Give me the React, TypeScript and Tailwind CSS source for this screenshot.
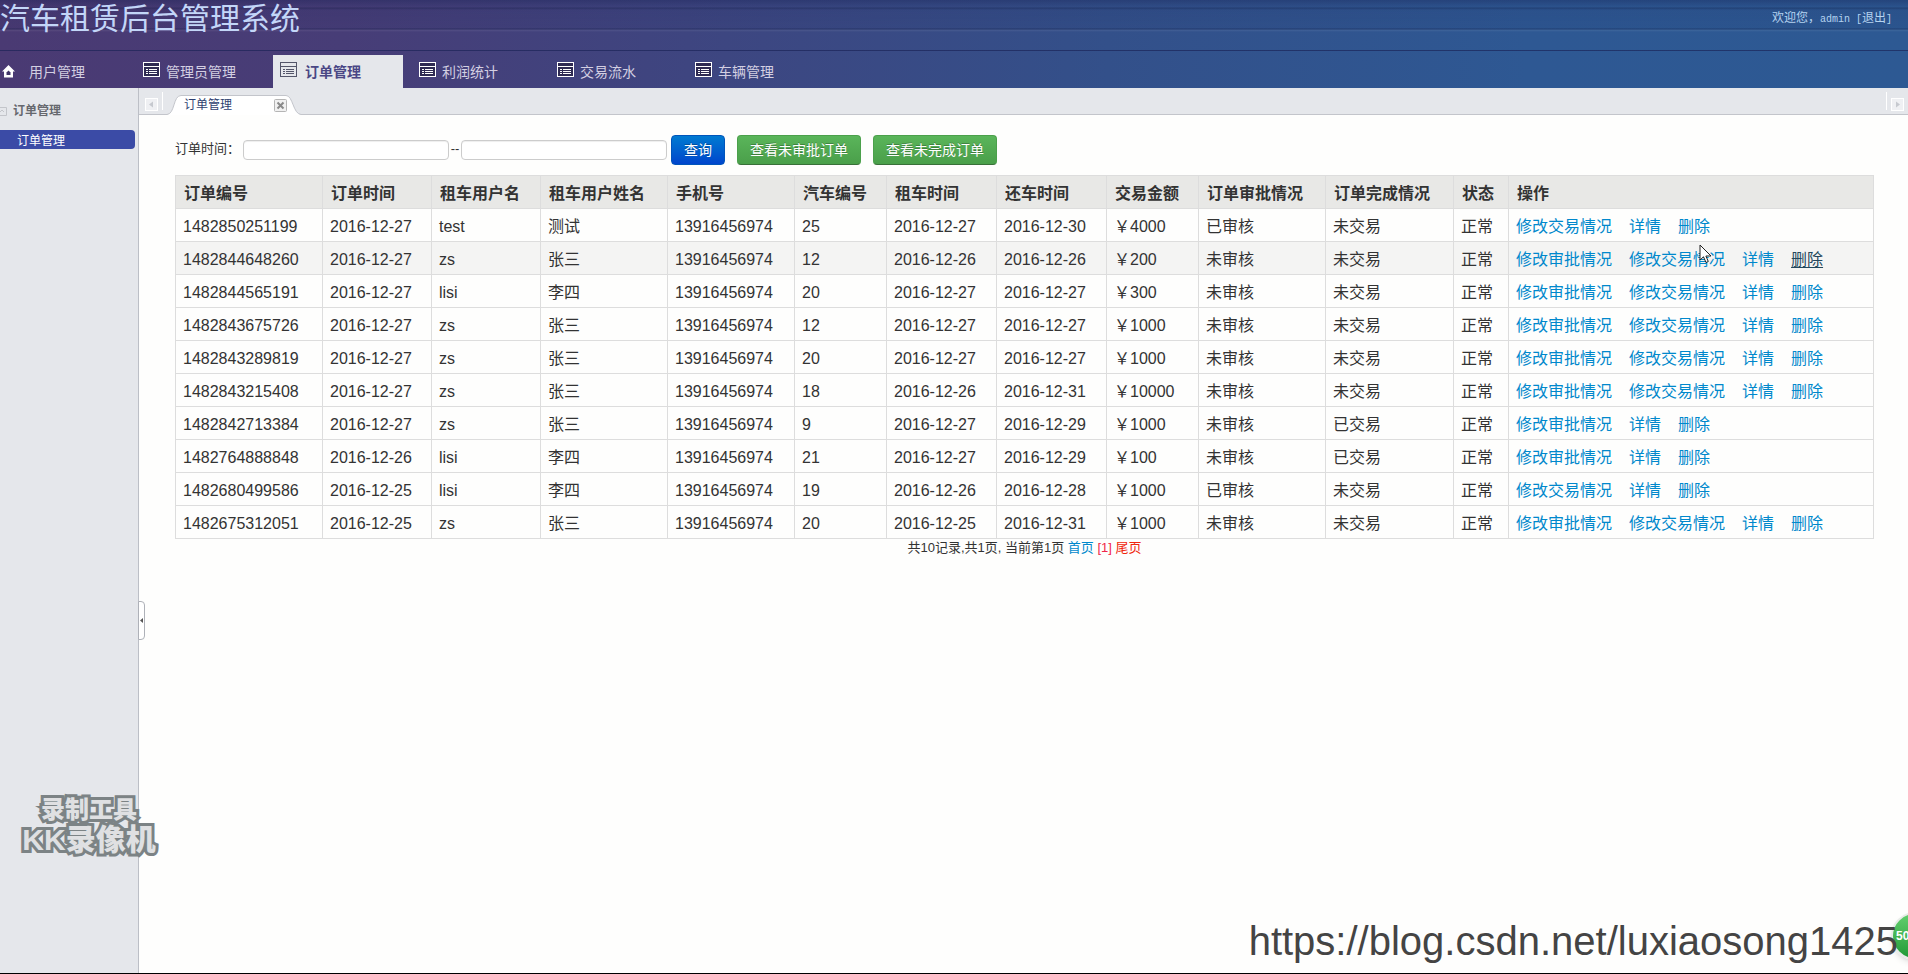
import type { ReactNode } from 'react';

interface Order {
  id: string;
  date: string;
  user: string;
  name: string;
  car: string;
  start: string;
  end: string;
  amount: string;
  approved: boolean;
  traded: boolean;
}

const orders: Order[] = [
  { id: '1482850251199', date: '2016-12-27', user: 'test', name: '测试', car: '25', start: '2016-12-27', end: '2016-12-30', amount: '4000', approved: true, traded: false },
  { id: '1482844648260', date: '2016-12-27', user: 'zs', name: '张三', car: '12', start: '2016-12-26', end: '2016-12-26', amount: '200', approved: false, traded: false },
  { id: '1482844565191', date: '2016-12-27', user: 'lisi', name: '李四', car: '20', start: '2016-12-27', end: '2016-12-27', amount: '300', approved: false, traded: false },
  { id: '1482843675726', date: '2016-12-27', user: 'zs', name: '张三', car: '12', start: '2016-12-27', end: '2016-12-27', amount: '1000', approved: false, traded: false },
  { id: '1482843289819', date: '2016-12-27', user: 'zs', name: '张三', car: '20', start: '2016-12-27', end: '2016-12-27', amount: '1000', approved: false, traded: false },
  { id: '1482843215408', date: '2016-12-27', user: 'zs', name: '张三', car: '18', start: '2016-12-26', end: '2016-12-31', amount: '10000', approved: false, traded: false },
  { id: '1482842713384', date: '2016-12-27', user: 'zs', name: '张三', car: '9', start: '2016-12-27', end: '2016-12-29', amount: '1000', approved: false, traded: true },
  { id: '1482764888848', date: '2016-12-26', user: 'lisi', name: '李四', car: '21', start: '2016-12-27', end: '2016-12-29', amount: '100', approved: false, traded: true },
  { id: '1482680499586', date: '2016-12-25', user: 'lisi', name: '李四', car: '19', start: '2016-12-26', end: '2016-12-28', amount: '1000', approved: true, traded: false },
  { id: '1482675312051', date: '2016-12-25', user: 'zs', name: '张三', car: '20', start: '2016-12-25', end: '2016-12-31', amount: '1000', approved: false, traded: false },
];

const columns = [
  { title: '订单编号', width: 'w-[147px]' },
  { title: '订单时间', width: 'w-[109px]' },
  { title: '租车用户名', width: 'w-[109px]' },
  { title: '租车用户姓名', width: 'w-[127px]' },
  { title: '手机号', width: 'w-[127px]' },
  { title: '汽车编号', width: 'w-[92px]' },
  { title: '租车时间', width: 'w-[110px]' },
  { title: '还车时间', width: 'w-[110px]' },
  { title: '交易金额', width: 'w-[92px]' },
  { title: '订单审批情况', width: 'w-[127px]' },
  { title: '订单完成情况', width: 'w-[128px]' },
  { title: '状态', width: 'w-[55px]' },
  { title: '操作', width: '' },
];

const navItems = ['用户管理', '管理员管理', '订单管理', '利润统计', '交易流水', '车辆管理'];
const ACTIVE_NAV = '订单管理';

function HomeIcon() {
  return (
    <svg width="13" height="13" viewBox="0 0 13 13" aria-hidden="true">
      <path d="M6.5 0 L13 6.5 H11 V12.5 H2 V6.5 H0 Z" fill="#fff" />
      <path d="M6.5 5.5 L8.5 7.5 V10 H4.5 V7.5 Z" fill="#3f3467" />
    </svg>
  );
}

function ListIcon({ dark }: { dark?: boolean }) {
  const c = dark ? '#54566a' : '#fff';
  return (
    <svg width="17" height="16" viewBox="0 0 17 16" shapeRendering="crispEdges" aria-hidden="true">
      <rect x="0.5" y="0.5" width="16" height="14" fill={dark ? 'none' : '#2e2a52'} stroke={c} />
      <path d="M1 4.5H16" stroke={c} />
      <path d="M3 7.5H5M6 7.5H14M3 9.5H5M6 9.5H14M3 11.5H5M6 11.5H14" stroke={c} />
    </svg>
  );
}

function Arrow({ right }: { right?: boolean }) {
  return (
    <svg width="13" height="13" viewBox="0 0 13 13" aria-hidden="true">
      <rect x="0.5" y="0.5" width="12" height="12" fill="#eff0f3" stroke="#fff" />
      <path d={right ? 'M5 3.5L9 6.5L5 9.5Z' : 'M8 3.5L4 6.5L8 9.5Z'} fill="#c6c9cf" />
    </svg>
  );
}

function ActionLink({ children, hovered }: { children: ReactNode; hovered?: boolean }) {
  return (
    <a href="#" className={hovered ? 'text-[#23475c] underline underline-offset-2' : 'text-[#0088cc]'}>
      {children}
    </a>
  );
}

function Header() {
  return (
    <header className="flex h-[88px] flex-col bg-[linear-gradient(90deg,#4a3a73_0%,#473d77_18%,#3e4580_36%,#33508a_58%,#2e5893_80%,#2d5993_100%)]">
      <div className="flex h-[51px] items-start justify-between border-b border-[#1c2358]/50 bg-[linear-gradient(180deg,rgba(20,30,80,0.35)_0px,rgba(20,30,80,0.1)_7px,rgba(10,20,60,0.35)_8px,rgba(20,30,80,0.12)_10px,rgba(20,30,80,0.08)_28px,rgba(10,20,60,0.4)_29px,rgba(255,255,255,0.08)_30px,transparent_32px)]">
        <h1 className="text-[30px] leading-[38px] text-[#c3d6f8]">汽车租赁后台管理系统</h1>
        <p className="pr-4 pt-2 text-xs leading-5 text-[#b5d3f0]">
          欢迎您，<span className="font-['Liberation_Mono'] text-[10px]">admin [</span>
          <a href="#">退出</a>
          <span className="font-['Liberation_Mono'] text-[10px]">]</span>
        </p>
      </div>
      <nav className="flex flex-1 items-end">
        {navItems.map((item, i) => {
          const active = item === ACTIVE_NAV;
          return (
            <a
              key={item}
              href="#"
              className={
                active
                  ? 'mr-2 flex h-[33px] w-[130px] gap-2 bg-[#e5e7eb] pl-[7px] pt-[7px] text-sm font-bold leading-5 text-[#4a4785]'
                  : i === 0
                    ? 'flex h-[33px] w-[135px] gap-[14px] pt-[7px] pl-[2px] text-sm leading-5 text-[#d3cfe2]'
                    : 'flex h-[33px] w-[138px] gap-[6px] pl-2 pt-[7px] text-sm leading-5 text-[#d3cfe2]'
              }
            >
              {i === 0 ? <span className="pt-[3px]"><HomeIcon /></span> : <ListIcon dark={active} />}
              <span>{item}</span>
            </a>
          );
        })}
      </nav>
    </header>
  );
}

function Sidebar() {
  return (
    <aside className="relative w-[139px] shrink-0 border-r border-[#bcbfc6] bg-[#e5e7eb] text-xs">
      <h2 className="flex h-[42px] items-center gap-[6px] pt-1 font-bold text-[#66686e]">
        <svg width="7" height="9" viewBox="0 0 7 9" aria-hidden="true">
          <path d="M0 0.5H6.5V8.5H0M0 5L2 3L4 5" fill="none" stroke="#c3c5ca" />
        </svg>
        订单管理
      </h2>
      <a href="#" className="mr-[3px] block h-[19px] rounded-r-sm bg-[#3b4ba6] pl-[17px] pt-px leading-5 text-white">
        订单管理
      </a>
      <button
        type="button"
        aria-label="收起侧栏"
        className="absolute left-[138px] top-[513px] flex h-[39px] w-[7px] items-center rounded-r-sm border border-[#aeb1b8] bg-white"
      >
        <svg width="5" height="7" viewBox="0 0 5 7" aria-hidden="true">
          <path d="M4 1L1 3.5L4 6Z" fill="#555" />
        </svg>
      </button>
      <p className="absolute left-[20px] top-[708px] z-10 flex w-[138px] flex-col items-center font-black whitespace-nowrap text-[#dfe0e2] [-webkit-text-stroke:6px_#7c8385] [paint-order:stroke_fill]">
        <span className="text-2xl leading-7">录制工具</span>
        <span className="text-[30px] leading-8">KK录像机</span>
      </p>
    </aside>
  );
}

function TabBar() {
  return (
    <div className="flex h-[27px] items-end border-b border-[#c3c5cb] bg-[#e5e7eb]">
      <button type="button" aria-label="向左" className="mb-[3px] ml-[6px] mr-1">
        <Arrow />
      </button>
      <div className="mb-1 h-[18px] w-px bg-white" />
      <div className="relative -mb-px ml-1 flex h-[20px] w-[134px] items-center justify-between pl-[17px] pr-[14px] text-xs text-[#2e3f70]">
        <svg className="absolute inset-0" width="134" height="20" viewBox="0 0 134 20" aria-hidden="true">
          <path d="M0 19.5C8 19 6 0.5 14 0.5H119C126 0.5 126 19 134 19.5V20H0Z" fill="#fff" />
          <path d="M0 19.5C8 19 6 0.5 14 0.5H119C126 0.5 126 19 134 19.5" fill="none" stroke="#c3c5cb" />
        </svg>
        <span className="relative">订单管理</span>
        <button type="button" aria-label="关闭" className="relative">
          <svg width="13" height="13" viewBox="0 0 13 13" aria-hidden="true">
            <rect x="0.5" y="0.5" width="12" height="12" rx="1" fill="#f1f1f1" stroke="#b5b5b5" />
            <path d="M3.5 3.5L9.5 9.5M9.5 3.5L3.5 9.5" stroke="#8a8a8a" strokeWidth="2" />
          </svg>
        </button>
      </div>
      <div className="mb-1 ml-auto h-[18px] w-px bg-white" />
      <button type="button" aria-label="向右" className="mb-[3px] ml-1 mr-1">
        <Arrow right />
      </button>
    </div>
  );
}

function SearchBar() {
  const input = 'h-5 w-[206px] rounded border border-[#ccc] bg-white px-1 text-xs shadow-[inset_0_1px_1px_rgba(0,0,0,0.07)]';
  const green = 'h-[30px] rounded border border-[#4ba04b] border-b-[#387038] bg-linear-to-b from-[#5ab55a] to-[#4a9f4a] px-3 text-sm leading-5 text-white [text-shadow:0_-1px_0_rgba(0,0,0,0.25)]';
  return (
    <form className="flex items-center text-[13px] text-[#333]" onSubmit={(e) => e.preventDefault()}>
      <label htmlFor="from" className="w-[68px] pb-[3px]">订单时间：</label>
      <input id="from" type="text" className={input} />
      <label htmlFor="to" className="w-3 pb-[3px] text-center">--</label>
      <input id="to" type="text" className={input} />
      <button
        type="submit"
        className="ml-1 h-[30px] rounded border border-[#0055bb] bg-linear-to-b from-[#007ad1] to-[#0044cc] px-3 text-sm leading-5 text-white [text-shadow:0_-1px_0_rgba(0,0,0,0.25)]"
      >
        查询
      </button>
      <button type="button" className={`${green} ml-3`}>查看未审批订单</button>
      <button type="button" className={`${green} ml-3`}>查看未完成订单</button>
    </form>
  );
}

function OrderTable() {
  return (
    <table className="mt-[10px] w-full table-fixed border-collapse border border-[#ddd] text-base leading-6 text-[#333]">
      <thead className="bg-[#e8e8e6]">
        <tr className="h-[33px]">
          {columns.map((c) => (
            <th key={c.title} className={`${c.width} border border-[#ddd] px-2 pt-[3px] text-left font-bold whitespace-nowrap`}>
              {c.title}
            </th>
          ))}
        </tr>
      </thead>
      <tbody>
        {orders.map((o, i) => {
          const cells = [
            o.id, o.date, o.user, o.name, '13916456974', o.car, o.start, o.end, `￥${o.amount}`,
            o.approved ? '已审核' : '未审核', o.traded ? '已交易' : '未交易', '正常',
          ];
          return (
            <tr key={o.id} className={i === 1 ? 'h-[33px] bg-[#f4f4f3]' : 'h-[33px]'}>
              {cells.map((cell, j) => (
                <td key={j} className="border border-[#ddd] px-[7px] pt-[3px] whitespace-nowrap">{cell}</td>
              ))}
              <td className="border border-[#ddd] px-[7px] pt-[3px]">
                <div className="flex gap-[17px] whitespace-nowrap">
                  {!o.approved && <ActionLink>修改审批情况</ActionLink>}
                  {!o.traded && <ActionLink>修改交易情况</ActionLink>}
                  <ActionLink>详情</ActionLink>
                  <ActionLink hovered={i === 1}>删除</ActionLink>
                </div>
              </td>
            </tr>
          );
        })}
      </tbody>
    </table>
  );
}

export default function App() {
  return (
    <div className="relative flex min-h-screen flex-col overflow-hidden border-b border-black bg-[#fefefd] font-['Liberation_Sans','Noto_Sans_CJK_SC',sans-serif]">
      <Header />
      <div className="flex flex-1">
        <Sidebar />
        <main className="min-w-0 flex-1">
          <TabBar />
          <div className="pl-9 pr-[34px] pt-5">
            <SearchBar />
            <OrderTable />
            <p className="text-center text-[13px] leading-[18px] text-[#333]">
              共10记录,共1页, 当前第1页 <a href="#" className="text-[#0088cc]">首页</a>{' '}
              <span className="text-[#f0264a]">[1]</span> <a href="#" className="text-[#f0260c]">尾页</a>
            </p>
          </div>
        </main>
      </div>

      {/* mouse pointer */}
      <svg className="absolute left-[1699px] top-[244px]" width="13" height="20" viewBox="0 0 13 20" aria-hidden="true">
        <path d="M1 1V16L4.500 12.800L7 18.500L9.300 17.500L6.900 12H12Z" fill="#fff" stroke="#222" />
      </svg>

      {/* floating monitor ball */}
      <div className="absolute -right-[31px] bottom-[13px] flex size-12 items-center rounded-full border-2 border-[#e8ece8] bg-linear-to-b from-[#62cf6e] to-[#1f9a36] pl-[3px] text-xs font-bold text-white shadow-md">
        50
      </div>
      <p className="absolute bottom-[6px] right-[10px] text-[40px] leading-[52px] text-[#444]">
        https://blog.csdn.net/luxiaosong1425
      </p>
    </div>
  );
}
